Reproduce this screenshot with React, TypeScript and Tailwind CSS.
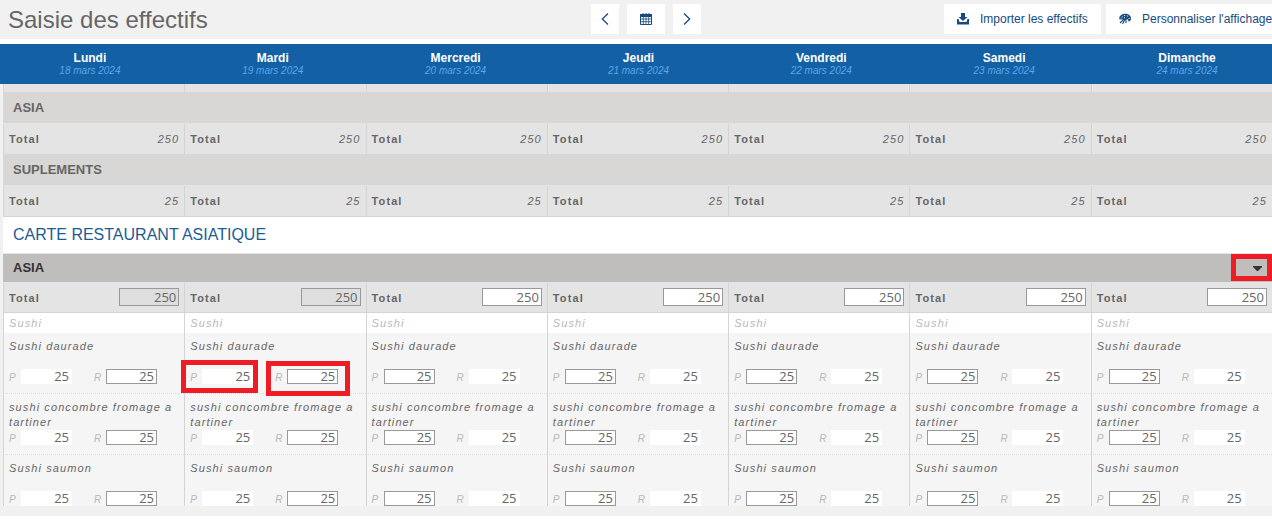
import React from "react";

const DAYS = [
    { name: "Lundi", date: "18 mars 2024", past: true },
    { name: "Mardi", date: "19 mars 2024", past: true },
    { name: "Mercredi", date: "20 mars 2024", past: false },
    { name: "Jeudi", date: "21 mars 2024", past: false },
    { name: "Vendredi", date: "22 mars 2024", past: false },
    { name: "Samedi", date: "23 mars 2024", past: false },
    { name: "Dimanche", date: "24 mars 2024", past: false },
];

const DISHES = ["Sushi daurade", "sushi concombre fromage a tartiner", "Sushi saumon"];

const MARK = "pointer-events-none absolute z-10 border-[5px] border-[#ee1c24]";

const ChevronIcon = ({ flip }: { flip?: boolean }) => (
    <svg width="8" height="12" viewBox="0 0 8 12" className={flip ? "rotate-180" : ""}>
        <path d="M7 .5 1.300 6 7 11.500" fill="none" stroke="currentColor" strokeWidth="1.3" />
    </svg>
);

const CalendarIcon = () => (
    <svg width="12" height="12" viewBox="0 0 12 12" fill="none" stroke="currentColor">
        <path d="M0 1h12v3H0z" fill="currentColor" stroke="none" />
        <path d="M3 0v2M6 0v2M9 0v2" strokeWidth="1" />
        <path d="M.5 3v8.500h11V3" />
        <path d="M0 6h12M0 8.700h12M3.300 4v7.500M6 4v7.500M8.700 4v7.500" strokeWidth=".8" />
    </svg>
);

const ImportIcon = () => (
    <svg width="12" height="12" viewBox="0 0 12 12" fill="currentColor">
        <path d="M4 0h4v4h2.500L6 8 1.500 4H4z" />
        <path d="M0 6h1.500l1 3h7l1-3H12v5.500H0z" />
    </svg>
);

const PaletteIcon = () => (
    <svg width="12" height="12" viewBox="0 0 12 12">
        <path
            d="M0 5.500C.5 2.500 3 .8 6.200.8 9.500.8 12 2.700 12 5.500 12 7.500 11 8.500 9.500 8.500L9 6.500 6.500 6z"
            fill="currentColor"
        />
        <path
            d="M.5 6 6 5.500M6 5 1 10M6.500 5.500 3.500 11M7 6v4"
            stroke="currentColor"
            strokeWidth="1.1"
            fill="none"
        />
        <path d="M2.500 4h1.200M5 2.500h1.200M8 3h1.200M9.500 5.500h1.200M5 4.700h1" stroke="#fff" strokeWidth=".9" />
    </svg>
);

const SectionRow = ({ title }: { title: string }) => (
    <tr>
        <th
            colSpan={7}
            className="h-8 border-b border-[#e4e4e4] bg-[#d8d7d5] px-2.5 text-left text-[13px] leading-4 font-bold"
        >
            {title}
        </th>
    </tr>
);

const TotalRow = ({ value }: { value: string }) => (
    <tr>
        {DAYS.map((day) => (
            <td key={day.name} className="h-[30px] border-l border-[#d4d4d4] bg-[#e4e4e4] px-[5px]">
                <div className="flex justify-between text-[11px] leading-4 tracking-widest">
                    <b>Total</b>
                    <i>{value}</i>
                </div>
            </td>
        ))}
    </tr>
);

const Field = ({ label, name, boxed }: { label: string; name: string; boxed: boolean }) => (
    <label className="flex items-center">
        <span className="w-3 pt-0.5 text-[10px] leading-3 text-[#b8b8b8] italic">{label}</span>
        <input
            aria-label={name}
            defaultValue="25"
            className={`h-[15px] w-[51px] border bg-white pr-0.5 pb-0.5 text-right font-['Open_Sans',sans-serif] text-[13px] leading-3 ${
                boxed ? "border-[#999]" : "border-white"
            }`}
        />
    </label>
);

export default function App() {
    return (
        <div className="overflow-hidden bg-white font-['Liberation_Sans',Arial,sans-serif] text-[#666]">
            <header className="flex h-[39px] items-start bg-[#f1f1f1]">
                <h1 className="w-[591px] shrink-0 pt-1.5 pl-2 text-2xl leading-7">Saisie des effectifs</h1>
                <nav className="flex gap-2 pt-1 text-[#174a80]">
                    <button aria-label="Semaine précédente" className="flex h-[30px] w-7 items-center justify-center bg-white">
                        <ChevronIcon />
                    </button>
                    <button aria-label="Calendrier" className="flex h-[30px] w-[38px] items-center justify-center bg-white">
                        <CalendarIcon />
                    </button>
                    <button aria-label="Semaine suivante" className="flex h-[30px] w-7 items-center justify-center bg-white">
                        <ChevronIcon flip />
                    </button>
                </nav>
                <div className="ml-auto flex w-[328px] shrink-0 gap-[5px] pt-1 text-xs whitespace-nowrap text-[#174a80]">
                    <button className="flex h-[30px] w-[157px] shrink-0 items-center gap-[11px] bg-white pl-[13px]">
                        <ImportIcon />
                        Importer les effectifs
                    </button>
                    <button className="flex h-[30px] shrink-0 items-center gap-[11px] bg-white px-[13px]">
                        <PaletteIcon />
                        Personnaliser l'affichage
                    </button>
                </div>
            </header>

            <table className="mt-[5px] w-[calc(100%+8px)] table-fixed border-collapse bg-[#1460a5]">
                <thead>
                    <tr>
                        {DAYS.map((day) => (
                            <th key={day.name} className="h-10 pr-[3px] text-center align-top">
                                <div className="pt-[7px] text-xs leading-[14px] text-white">{day.name}</div>
                                <div className="text-[10px] leading-3 font-normal text-[#58a6ea] italic">{day.date}</div>
                            </th>
                        ))}
                    </tr>
                </thead>
            </table>

            <main className="bg-[#f1f1f1] pb-2.5 pl-[3px]">
                <table className="w-full table-fixed border-separate border-spacing-0">
                    <tbody>
                        <tr>
                            {DAYS.map((day) => (
                                <td key={day.name} className="h-2 border-l border-[#d4d4d4] bg-[#e4e4e4] p-0" />
                            ))}
                        </tr>
                        <SectionRow title="ASIA" />
                        <TotalRow value="250" />
                        <SectionRow title="SUPLEMENTS" />
                        <TotalRow value="25" />
                        <tr>
                            <th
                                colSpan={7}
                                className="h-[38px] border-y border-t-[#d4d4d4] border-b-[#e4e4e4] bg-white px-2.5 text-left text-base leading-5 font-normal text-[#1d5c93]"
                            >
                                CARTE RESTAURANT ASIATIQUE
                            </th>
                        </tr>
                        <tr>
                            <th colSpan={7} className="relative h-[29px] border-b border-[#e4e4e4] bg-[#bfbebc] px-2.5 text-[#333]">
                                <div className="flex items-center justify-between text-[13px] leading-4 font-bold">
                                    ASIA
                                    <button aria-label="Déplier ASIA">
                                        <svg width="9" height="5" viewBox="0 0 9 5" fill="currentColor">
                                            <path d="M0 0h9v1L5 5H4L0 1z" />
                                        </svg>
                                    </button>
                                </div>
                                <div className={`${MARK} top-0 right-0 h-[27px] w-[41px]`} />
                            </th>
                        </tr>
                        <tr>
                            {DAYS.map((day) => (
                                <td key={day.name} className="h-[30px] border-b border-l border-[#d4d4d4] bg-[#e4e4e4] px-[5px] pb-0.5">
                                    <label className="flex items-end justify-between">
                                        <b className="text-[11px] leading-4 tracking-widest">Total</b>
                                        <input
                                            defaultValue="250"
                                            disabled={day.past}
                                            className="h-[18px] w-[60px] border border-[#999] bg-white pr-0.5 text-right font-['Open_Sans',sans-serif] text-[13px] leading-4 disabled:bg-[#dedede]"
                                        />
                                    </label>
                                </td>
                            ))}
                        </tr>
                        <tr>
                            {DAYS.map((day) => (
                                <td
                                    key={day.name}
                                    className="h-5 border-l border-[#d4d4d4] bg-white pl-[5px] text-[11px] leading-4 tracking-widest text-[#b8b8b8] italic"
                                >
                                    Sushi
                                </td>
                            ))}
                        </tr>
                        {DISHES.map((dish, row) => (
                            <tr key={dish}>
                                {DAYS.map((day, col) => (
                                    <td
                                        key={day.name}
                                        className={`border-l border-l-[#d4d4d4] bg-[#f5f5f5] pt-1.5 pl-[5px] align-top ${
                                            row < DISHES.length - 1 ? "border-b border-b-[#dcdcdc] pb-[9px] [border-bottom-style:dotted]" : ""
                                        }`}
                                    >
                                        <div className="min-h-[30px] text-[11px] leading-[15px] tracking-widest italic">{dish}</div>
                                        <div className="relative flex gap-[22px]">
                                            <Field label="P" name={`${dish} prévu ${day.name}`} boxed={!day.past} />
                                            <Field label="R" name={`${dish} réel ${day.name}`} boxed={day.past} />
                                            {row === 0 && col === 1 && (
                                                <>
                                                    <div className={`${MARK} -top-[9px] -left-[9px] h-[33px] w-[77px]`} />
                                                    <div className={`${MARK} -top-2 left-[76px] h-[35px] w-[84px]`} />
                                                </>
                                            )}
                                        </div>
                                    </td>
                                ))}
                            </tr>
                        ))}
                    </tbody>
                </table>
            </main>
        </div>
    );
}
